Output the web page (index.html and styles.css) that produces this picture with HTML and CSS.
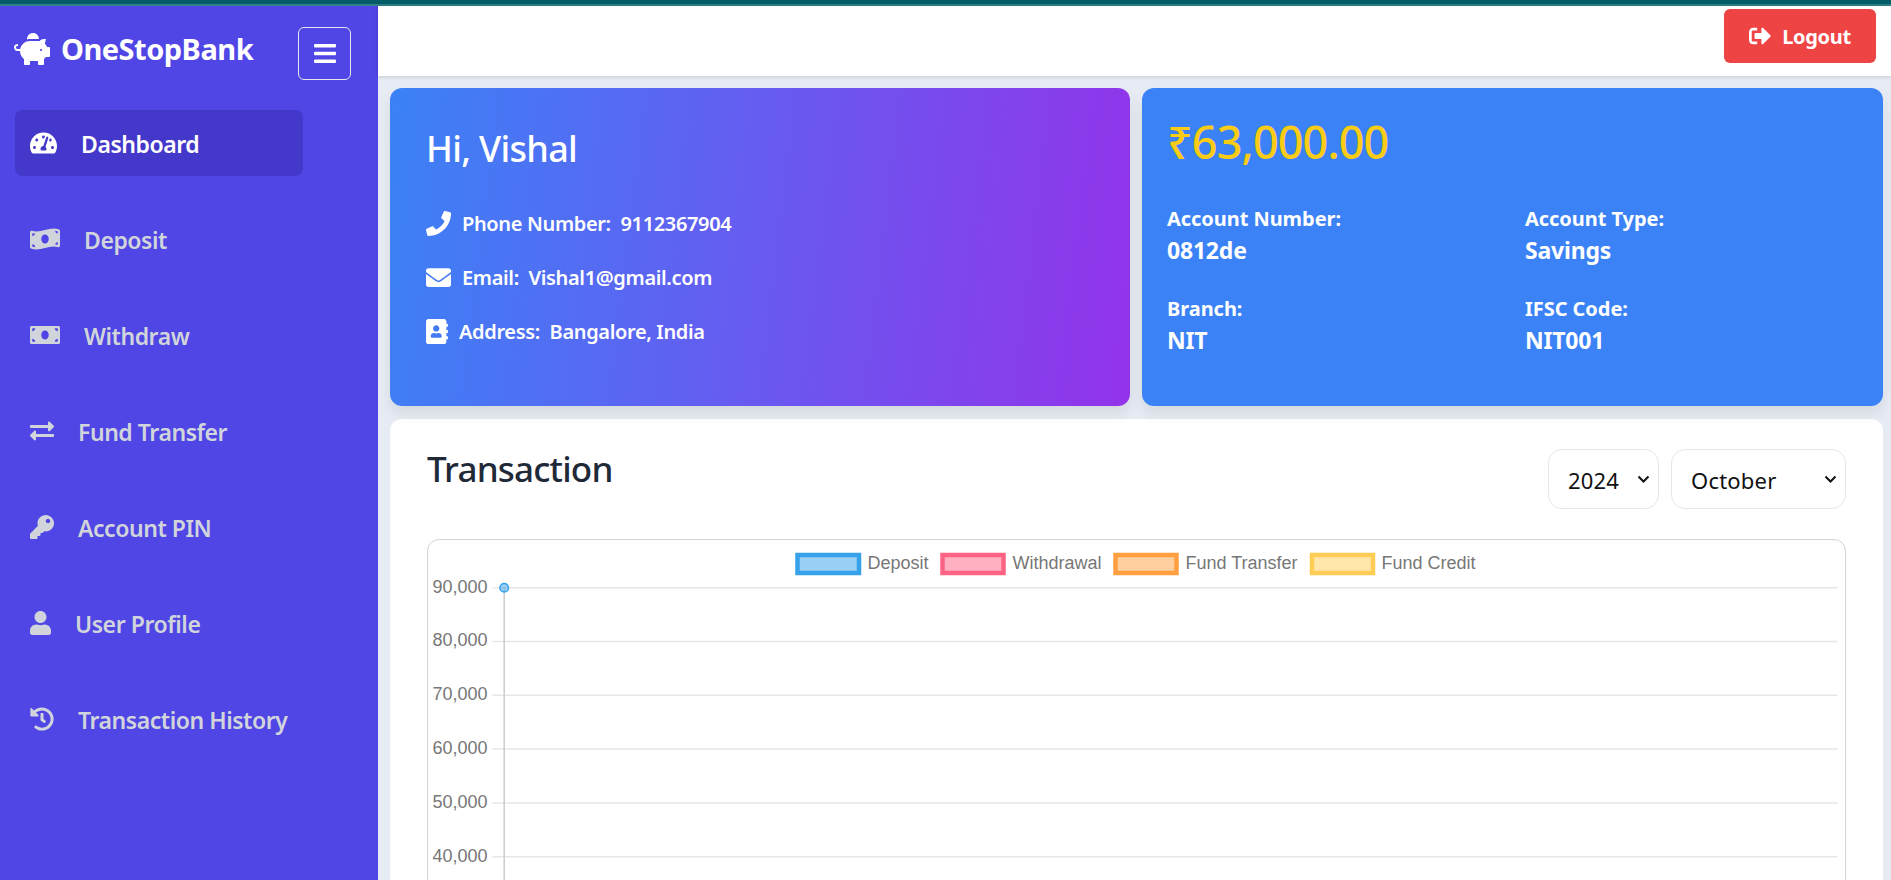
FILE: index.html
```html
<!DOCTYPE html>
<html lang="en">
<head>
  <meta charset="UTF-8">
  <meta name="viewport" content="width=device-width, initial-scale=1.0">
  <title>Dashboard - OneStopBank</title>
  <link rel="stylesheet" href="styles.css">
</head>
<body>
  <div class="top-band"></div>
  <div class="layout">
    <aside class="sidebar">
      <div class="brand-row">
        <div class="brand">
          <svg class="brand-icon" viewBox="0 0 576 512"><path d="M560 224h-29.5c-8.8-20-21.6-37.7-37.4-52.5L512 96h-32c-29.4 0-55.4 13.5-73 34.3-7.6-1.1-15.1-2.3-23-2.3H256c-77.4 0-141.9 55-156.8 128H56c-14.8 0-26.5-13.5-23.5-28.8C34.7 215.8 45.4 208 57 208h1c3.3 0 6-2.7 6-6v-20c0-3.3-2.7-6-6-6-28.5 0-53.9 20.4-57.5 48.6C-3.9 258.8 22.7 288 56 288h40c0 52.2 25.4 98.1 64 127.3V496c0 8.8 7.2 16 16 16h64c8.8 0 16-7.2 16-16v-48h128v48c0 8.8 7.2 16 16 16h64c8.8 0 16-7.2 16-16v-80.9c11.8-8.9 22.3-19.4 31.3-31.1H560c8.8 0 16-7.2 16-16V240c0-8.8-7.2-16-16-16zm-128 64c-8.8 0-16-7.2-16-16s7.2-16 16-16 16 7.2 16 16-7.2 16-16 16zM256 96h128c5.4 0 10.7.4 15.9.8 0-.3.1-.5.1-.8 0-53-43-96-96-96s-96 43-96 96c0 2.1.5 4.1.6 6.2 15.2-3.9 31-6.2 47.4-6.2z"/></svg>
          <span class="brand-name">OneStopBank</span>
        </div>
        <button class="menu-toggle" type="button" aria-label="Toggle menu">
          <svg viewBox="0 0 448 512"><path d="M16 132h416c8.837 0 16-7.163 16-16V76c0-8.837-7.163-16-16-16H16C7.163 60 0 67.163 0 76v40c0 8.837 7.163 16 16 16zm0 160h416c8.837 0 16-7.163 16-16v-40c0-8.837-7.163-16-16-16H16c-8.837 0-16 7.163-16 16v40c0 8.837 7.163 16 16 16zm0 160h416c8.837 0 16-7.163 16-16v-40c0-8.837-7.163-16-16-16H16c-8.837 0-16 7.163-16 16v40c0 8.837 7.163 16 16 16z"/></svg>
        </button>
      </div>

      <nav class="side-nav">
        <a class="nav-item active" href="#">
          <svg class="icon icon-md" viewBox="0 0 576 512"><path d="M288 32C128.94 32 0 160.94 0 320c0 52.8 14.25 102.26 39.06 144.8 5.61 9.62 16.3 15.2 27.44 15.2h443c11.14 0 21.83-5.58 27.44-15.2C561.75 422.26 576 372.8 576 320c0-159.06-128.94-288-288-288zm0 64c14.71 0 26.58 10.13 30.32 23.65-1.11 2.26-2.64 4.23-3.45 6.67l-9.22 27.67c-5.13 3.49-10.97 6.01-17.64 6.01-17.67 0-32-14.33-32-32S270.33 96 288 96zM96 384c-17.67 0-32-14.33-32-32s14.33-32 32-32 32 14.33 32 32-14.33 32-32 32zm48-160c-17.67 0-32-14.33-32-32s14.33-32 32-32 32 14.33 32 32-14.33 32-32 32zm246.77-72.41l-61.33 184C343.13 347.33 352 364.54 352 384c0 11.72-3.38 22.55-8.88 32H232.88c-5.5-9.45-8.88-20.28-8.88-32 0-33.94 26.5-61.43 59.9-63.59l61.34-184.01c4.17-12.56 17.73-19.45 30.36-15.17 12.57 4.19 19.35 17.79 15.17 30.36zm14.66 57.2l15.52-46.55c3.47-1.29 7.13-2.23 11.05-2.23 17.67 0 32 14.33 32 32s-14.33 32-32 32c-11.38-.01-20.89-6.28-26.57-15.22zM480 384c-17.67 0-32-14.33-32-32s14.33-32 32-32 32 14.33 32 32-14.33 32-32 32z"/></svg>
          <span>Dashboard</span>
        </a>
        <a class="nav-item" href="#">
          <svg class="icon icon-lg" viewBox="0 0 640 512"><path d="M621.16 54.46C582.37 38.19 543.55 32 504.75 32c-123.17-.01-246.33 62.34-369.5 62.34-30.89 0-61.76-3.92-92.65-13.72-3.47-1.1-6.95-1.62-10.35-1.62C15.04 79 0 92.32 0 110.81v317.26c0 12.63 7.23 24.6 18.84 29.46C57.63 473.81 96.45 480 135.25 480c123.17 0 246.34-62.35 369.51-62.35 30.89 0 61.76 3.92 92.65 13.72 3.47 1.1 6.95 1.62 10.35 1.62 17.21 0 32.25-13.32 32.25-31.81V83.93c-.01-12.64-7.24-24.6-18.85-29.47zM48 132.22c20.12 5.04 41.12 7.57 62.72 8.93C104.84 170.54 79 192.69 48 192.69v-60.47zm0 285v-47.78c34.37 0 62.18 27.27 63.71 61.4-22.53-1.81-43.59-6.31-63.71-13.62zM320 352c-44.19 0-80-42.99-80-96 0-53.02 35.82-96 80-96s80 42.98 80 96c0 53.03-35.83 96-80 96zm272 27.78c-17.52-4.39-35.71-6.85-54.32-8.44 5.87-26.08 27.5-45.88 54.32-49.28v57.72zm0-236.11c-30.89-3.91-54.86-29.7-55.81-61.55 19.54 2.17 38.09 6.74 55.81 13.55v48z"/></svg>
          <span>Deposit</span>
        </a>
        <a class="nav-item" href="#">
          <svg class="icon icon-lg" viewBox="0 0 640 512"><path d="M608 64H32C14.33 64 0 78.33 0 96v320c0 17.67 14.33 32 32 32h576c17.67 0 32-14.33 32-32V96c0-17.67-14.33-32-32-32zM48 400v-64c35.35 0 64 28.65 64 64H48zm0-224v-64h64c0 35.35-28.65 64-64 64zm272 176c-44.19 0-80-42.99-80-96 0-53.02 35.82-96 80-96s80 42.98 80 96c0 53.03-35.83 96-80 96zm272 48h-64c0-35.35 28.65-64 64-64v64zm0-224c-35.35 0-64-28.65-64-64h64v64z"/></svg>
          <span>Withdraw</span>
        </a>
        <a class="nav-item" href="#">
          <svg class="icon" viewBox="0 0 512 512"><path d="M0 168v-16c0-13.255 10.745-24 24-24h360V80c0-21.367 25.899-32.042 40.971-16.971l80 80c9.372 9.373 9.372 24.569 0 33.941l-80 80C409.956 272.982 384 262.456 384 240v-48H24c-13.255 0-24-10.745-24-24zm488 152H128v-48c0-21.314-25.862-32.08-40.971-16.971l-80 80c-9.372 9.373-9.372 24.569 0 33.941l80 80C102.057 463.997 128 453.437 128 432v-48h360c13.255 0 24-10.745 24-24v-16c0-13.255-10.745-24-24-24z"/></svg>
          <span>Fund Transfer</span>
        </a>
        <a class="nav-item" href="#">
          <svg class="icon" viewBox="0 0 512 512"><path d="M512 176.001C512 273.203 433.202 352 336 352c-11.22 0-22.19-1.062-32.827-3.069l-24.012 27.014A23.999 23.999 0 0 1 261.223 384H224v40c0 13.255-10.745 24-24 24h-40v40c0 13.255-10.745 24-24 24H24c-13.255 0-24-10.745-24-24v-78.059c0-6.365 2.529-12.47 7.029-16.971l161.802-161.802C163.108 213.814 160 195.271 160 176 160 78.798 238.797.001 335.999 0 433.488-.001 512 78.511 512 176.001zM336 128c0 26.51 21.49 48 48 48s48-21.49 48-48-21.49-48-48-48-48 21.49-48 48z"/></svg>
          <span>Account PIN</span>
        </a>
        <a class="nav-item" href="#">
          <svg class="icon icon-sm" viewBox="0 0 448 512"><path d="M224 256c70.7 0 128-57.3 128-128S294.7 0 224 0 96 57.3 96 128s57.3 128 128 128zm89.6 32h-16.7c-22.2 10.2-46.9 16-72.9 16s-50.6-5.8-72.9-16h-16.7C60.2 288 0 348.2 0 422.4V464c0 26.5 21.5 48 48 48h352c26.5 0 48-21.5 48-48v-41.6c0-74.2-60.2-134.4-134.4-134.4z"/></svg>
          <span>User Profile</span>
        </a>
        <a class="nav-item" href="#">
          <svg class="icon" viewBox="0 0 512 512"><path d="M504 255.531c.253 136.64-111.18 248.372-247.82 248.468-59.015.042-113.223-20.53-155.822-54.911-11.077-8.94-11.905-25.541-1.839-35.607l11.267-11.267c8.609-8.609 22.353-9.551 31.891-1.984C173.062 425.135 212.781 440 256 440c101.705 0 184-82.311 184-184 0-101.705-82.311-184-184-184-48.814 0-93.149 18.969-126.068 49.932l50.754 50.754c10.08 10.08 2.941 27.314-11.313 27.314H24c-8.837 0-16-7.163-16-16V38.627c0-14.254 17.234-21.393 27.314-11.314l49.372 49.372C129.209 34.136 189.552 8 256 8c136.81 0 247.747 110.78 248 247.531zm-180.912 78.784l9.823-12.63c8.138-10.463 6.253-25.542-4.21-33.679L288 256.349V152c0-13.255-10.745-24-24-24h-16c-13.255 0-24 10.745-24 24v135.651l65.409 50.874c10.463 8.137 25.541 6.253 33.679-4.21z"/></svg>
          <span>Transaction History</span>
        </a>
      </nav>
    </aside>

    <div class="content">
      <header class="topbar">
        <button class="logout-btn" type="button">
          <svg viewBox="0 0 512 512"><path d="M497 273L329 441c-15 15-41 4.5-41-17v-96H152c-13.3 0-24-10.7-24-24v-96c0-13.3 10.7-24 24-24h136V88c0-21.4 25.9-32 41-17l168 168c9.3 9.4 9.3 24.6 0 34zM192 436v-40c0-6.6-5.4-12-12-12H96c-17.7 0-32-14.3-32-32V160c0-17.7 14.3-32 32-32h84c6.6 0 12-5.4 12-12V76c0-6.6-5.4-12-12-12H96c-53 0-96 43-96 96v192c0 53 43 96 96 96h84c6.6 0 12-5.4 12-12z"/></svg>
          <span>Logout</span>
        </button>
      </header>

      <main class="main">
        <div class="cards">
          <section class="card-user">
            <h1 class="greeting">Hi, Vishal</h1>
            <ul class="contact-list">
              <li>
                <svg class="contact-icon" viewBox="0 0 512 512"><path d="M493.4 24.6l-104-24c-11.3-2.6-22.9 3.3-27.5 13.9l-48 112c-4.2 9.8-1.4 21.3 6.9 28l60.6 49.6c-36 76.7-98.9 140.5-177.2 177.2l-49.6-60.6c-6.8-8.3-18.2-11.1-28-6.9l-112 48C3.9 366.5-2 378.1.6 389.4l24 104C27.1 504.2 36.7 512 48 512c256.1 0 464-207.5 464-464 0-11.2-7.7-20.9-18.6-23.4z"/></svg>
                <span>Phone Number:&nbsp; 9112367904</span>
              </li>
              <li>
                <svg class="contact-icon" viewBox="0 0 512 512"><path d="M502.3 190.8c3.9-3.1 9.7-.2 9.7 4.7V400c0 26.5-21.5 48-48 48H48c-26.5 0-48-21.5-48-48V195.6c0-5 5.7-7.8 9.7-4.7 22.4 17.4 52.1 39.5 154.1 113.6 21.1 15.4 56.7 47.8 92.2 47.6 35.7.3 72-32.8 92.3-47.6 102-74.1 131.6-96.3 154-113.7zM256 320c23.2.4 56.6-29.2 73.4-41.4 132.7-96.3 142.8-104.7 173.4-128.7 5.8-4.5 9.2-11.5 9.2-18.9v-19c0-26.5-21.5-48-48-48H48C21.5 64 0 85.5 0 112v19c0 7.4 3.4 14.3 9.2 18.9 30.6 23.9 40.7 32.4 173.4 128.7 16.8 12.2 50.2 41.8 73.4 41.4z"/></svg>
                <span>Email:&nbsp; Vishal1@gmail.com</span>
              </li>
              <li>
                <svg class="contact-icon contact-icon-sm" viewBox="0 0 448 512"><path d="M436 160c6.6 0 12-5.4 12-12v-40c0-6.6-5.4-12-12-12h-20V48c0-26.5-21.5-48-48-48H48C21.5 0 0 21.5 0 48v416c0 26.5 21.5 48 48 48h320c26.5 0 48-21.5 48-48v-48h20c6.6 0 12-5.4 12-12v-40c0-6.6-5.4-12-12-12h-20v-64h20c6.6 0 12-5.4 12-12v-40c0-6.6-5.4-12-12-12h-20v-64h20zm-228-32c35.3 0 64 28.7 64 64s-28.7 64-64 64-64-28.7-64-64 28.7-64 64-64zm112 236.8c0 10.6-10 19.2-22.4 19.2H118.4C106 384 96 375.4 96 364.8v-19.2c0-31.8 30.1-57.6 67.2-57.6h5c12.3 5.1 25.7 8 39.8 8s27.6-2.9 39.8-8h5c37.1 0 67.2 25.8 67.2 57.6v19.2z"/></svg>
                <span>Address:&nbsp; Bangalore, India</span>
              </li>
            </ul>
          </section>

          <section class="card-account">
            <div class="balance">₹63,000.00</div>
            <div class="account-grid">
              <div class="account-field">
                <div class="field-label">Account Number:</div>
                <div class="field-value">0812de</div>
              </div>
              <div class="account-field">
                <div class="field-label">Account Type:</div>
                <div class="field-value">Savings</div>
              </div>
              <div class="account-field">
                <div class="field-label">Branch:</div>
                <div class="field-value">NIT</div>
              </div>
              <div class="account-field">
                <div class="field-label">IFSC Code:</div>
                <div class="field-value">NIT001</div>
              </div>
            </div>
          </section>
        </div>

        <section class="card-chart">
          <div class="chart-head">
            <h2>Transaction</h2>
            <div class="chart-filters">
              <select class="year-select">
                <option>2024</option>
              </select>
              <select class="month-select">
                <option>October</option>
              </select>
            </div>
          </div>

          <div class="chart-box">
            <svg class="chart" viewBox="428 540 1416 360">
              <!-- legend -->
              <rect class="swatch-blue" x="797" y="555" width="61.5" height="18"/>
              <text class="legend-text" x="867" y="569">Deposit</text>
              <rect class="swatch-pink" x="942" y="555" width="61" height="18"/>
              <text class="legend-text" x="1012" y="569">Withdrawal</text>
              <rect class="swatch-orange" x="1115" y="555" width="61" height="18"/>
              <text class="legend-text" x="1185" y="569">Fund Transfer</text>
              <rect class="swatch-yellow" x="1311.5" y="555" width="61" height="18"/>
              <text class="legend-text" x="1381" y="569">Fund Credit</text>

              <!-- y axis -->
              <g class="grid-lines">
                <line x1="492" x2="1837" y1="587.7" y2="587.7"/>
                <line x1="492" x2="1837" y1="641.5" y2="641.5"/>
                <line x1="492" x2="1837" y1="695.3" y2="695.3"/>
                <line x1="492" x2="1837" y1="749.1" y2="749.1"/>
                <line x1="492" x2="1837" y1="802.9" y2="802.9"/>
                <line x1="492" x2="1837" y1="856.7" y2="856.7"/>
              </g>
              <g class="axis-text">
                <text x="487" y="592.5">90,000</text>
                <text x="487" y="646.3">80,000</text>
                <text x="487" y="700.1">70,000</text>
                <text x="487" y="753.9">60,000</text>
                <text x="487" y="807.7">50,000</text>
                <text x="487" y="861.5">40,000</text>
              </g>

              <!-- deposit series, one point this month -->
              <line class="axis-line" x1="503.7" x2="503.7" y1="587.7" y2="900"/>
              <circle class="point" cx="503.7" cy="587.7" r="4.3"/>
            </svg>
          </div>
        </section>
      </main>
    </div>
  </div>
</body>
</html>
```

FILE: styles.css
```css
* {
  box-sizing: border-box;
}

html, body {
  height: 100%;
  margin: 0;
  overflow: hidden;
}

body {
  font-family: "Noto Sans", "Open Sans", sans-serif;
  background-color: #e7ecf4;
  color: #1f2937;
}

.top-band {
  height: 6px;
  background-color: #045d66;
  border-bottom: 2px solid #2f7f86;
}

.layout {
  display: flex;
  height: calc(100vh - 6px);
}

/* sidebar */
.sidebar {
  flex: 0 0 378px;
  background-color: #4f46e5;
  padding: 21px 0 0 15px;
}

.brand-row {
  display: flex;
  align-items: center;
  justify-content: space-between;
  width: 336px;
  margin-bottom: 30px;
}

.brand {
  display: flex;
  align-items: center;
  gap: 11px;
  margin: 0 0 10px -1px;
}

.brand-icon {
  width: 36px;
  height: 32px;
  fill: #fff;
}

.brand-name {
  color: #fff;
  font-size: 29px;
  font-weight: 700;
  line-height: 36px;
  letter-spacing: -0.5px;
}

.menu-toggle {
  display: flex;
  align-items: center;
  justify-content: center;
  width: 53px;
  height: 53px;
  padding: 0;
  background: transparent;
  border: 1px solid #e5e7eb;
  border-radius: 6px;
}

.menu-toggle svg {
  width: 22px;
  height: 25px;
  fill: #fff;
}

.side-nav {
  display: flex;
  flex-direction: column;
  gap: 30px;
}

.nav-item {
  display: flex;
  align-items: center;
  gap: 24px;
  width: 288px;
  height: 66px;
  padding-left: 15px;
  border-radius: 8px;
  color: #d1d5db;
  font-size: 23px;
  font-weight: 600;
  letter-spacing: -0.45px;
  text-decoration: none;
}

.nav-item span {
  padding-top: 2px;
}

.nav-item.active {
  background-color: #4338ca;
  color: #fff;
}

.icon {
  flex: none;
  width: 24px;
  height: 24px;
  fill: currentColor;
}

.icon-sm {
  width: 21px;
}

.icon-md {
  width: 27px;
}

.icon-lg {
  width: 30px;
}

/* right side */
.content {
  flex: 1;
  min-width: 0;
}

.topbar {
  position: relative;
  display: flex;
  align-items: flex-start;
  justify-content: flex-end;
  height: 70px;
  padding: 3px 15px 0 0;
  background-color: #fff;
  box-shadow: 0 1px 4px rgba(0, 0, 0, 0.15);
}

.logout-btn {
  display: flex;
  align-items: center;
  justify-content: center;
  gap: 11px;
  width: 152px;
  height: 54px;
  border: none;
  border-radius: 6px;
  background-color: #ef4444;
  color: #fff;
  font-family: inherit;
  font-size: 20px;
  font-weight: 700;
  letter-spacing: -0.3px;
}

.logout-btn svg {
  width: 22px;
  height: 22px;
  fill: #fff;
}

.main {
  padding: 12px 8px 0 12px;
}

.cards {
  display: grid;
  grid-template-columns: 740px 1fr;
  gap: 12px;
  margin-bottom: 13px;
}

.card-user {
  height: 318px;
  padding: 37px 36px 0;
  border-radius: 12px;
  background: linear-gradient(97deg, #3b82f6, #9333ea);
  color: #fff;
  box-shadow: 0 8px 14px rgba(0, 0, 0, 0.08);
}

.greeting {
  margin: 0 0 23px;
  font-size: 36px;
  font-weight: 500;
  line-height: 48px;
  letter-spacing: -0.7px;
}

.contact-list {
  list-style: none;
  margin: 0;
  padding: 0;
}

.contact-list li {
  display: flex;
  align-items: center;
  gap: 11px;
  height: 54px;
  font-size: 20px;
  font-weight: 600;
  letter-spacing: -0.35px;
}

.contact-icon {
  flex: none;
  width: 25px;
  height: 25px;
  fill: #fff;
}

.contact-icon-sm {
  width: 22px;
}

.card-account {
  height: 318px;
  padding: 25px;
  border-radius: 12px;
  background-color: #3b82f6;
  color: #fff;
  box-shadow: 0 8px 14px rgba(0, 0, 0, 0.08);
}

.balance {
  margin-bottom: 33px;
  color: #facc15;
  font-size: 45px;
  font-weight: 500;
  line-height: 58px;
  letter-spacing: -0.9px;
}

.account-grid {
  display: grid;
  grid-template-columns: 1fr 1fr;
  column-gap: 25px;
  row-gap: 27px;
}

.field-label {
  font-size: 20px;
  font-weight: 700;
  line-height: 30px;
  letter-spacing: -0.05px;
}

.field-value {
  font-size: 23px;
  font-weight: 700;
  line-height: 33px;
  letter-spacing: -0.2px;
}

.card-chart {
  padding: 30px 37px 0;
  border-radius: 12px;
  background-color: #fff;
}

.chart-head {
  display: flex;
  align-items: flex-start;
  justify-content: space-between;
  margin-bottom: 30px;
}

.chart-head h2 {
  margin: 0;
  font-size: 35px;
  font-weight: 500;
  line-height: 40px;
  letter-spacing: -0.8px;
  color: #1f2937;
}

.chart-filters {
  display: flex;
  gap: 12px;
}

.chart-filters select {
  height: 60px;
  padding: 2px 0 0 19px;
  border: 1px solid #e5e7eb;
  border-radius: 14px;
  appearance: none;
  background: #fff url("data:image/svg+xml,%3Csvg xmlns='http://www.w3.org/2000/svg' viewBox='0 0 13 9'%3E%3Cpath d='M1.5 1.5l5 5 5-5' fill='none' stroke='%23111' stroke-width='2'/%3E%3C/svg%3E") no-repeat right 8px center / 13px 9px;
  color: #111;
  font-family: inherit;
  font-size: 22px;
  letter-spacing: 0.2px;
}

.year-select {
  width: 111px;
}

.month-select {
  width: 175px;
}

.chart-box {
  border: 1px solid #d1d5db;
  border-radius: 12px;
}

.chart {
  display: block;
  width: 100%;
  height: 360px;
  font-family: "Liberation Sans", Arial, sans-serif;
  font-size: 18px;
}

.legend-text {
  fill: #777;
}

.axis-text text {
  fill: #777;
  text-anchor: end;
}

.grid-lines line {
  stroke: #e6e6e6;
  stroke-width: 1.5;
}

.axis-line {
  stroke: #cccccc;
  stroke-width: 1.5;
}

.point {
  fill: rgba(54, 162, 235, 0.5);
  stroke: #36a2eb;
  stroke-width: 1.5;
}

.swatch-blue {
  fill: rgba(54, 162, 235, 0.5);
  stroke: #36a2eb;
  stroke-width: 4.5;
}

.swatch-pink {
  fill: rgba(255, 99, 132, 0.5);
  stroke: #ff6384;
  stroke-width: 4.5;
}

.swatch-orange {
  fill: rgba(255, 159, 64, 0.5);
  stroke: #ff9f40;
  stroke-width: 4.5;
}

.swatch-yellow {
  fill: rgba(255, 205, 86, 0.5);
  stroke: #ffcd56;
  stroke-width: 4.5;
}
```
